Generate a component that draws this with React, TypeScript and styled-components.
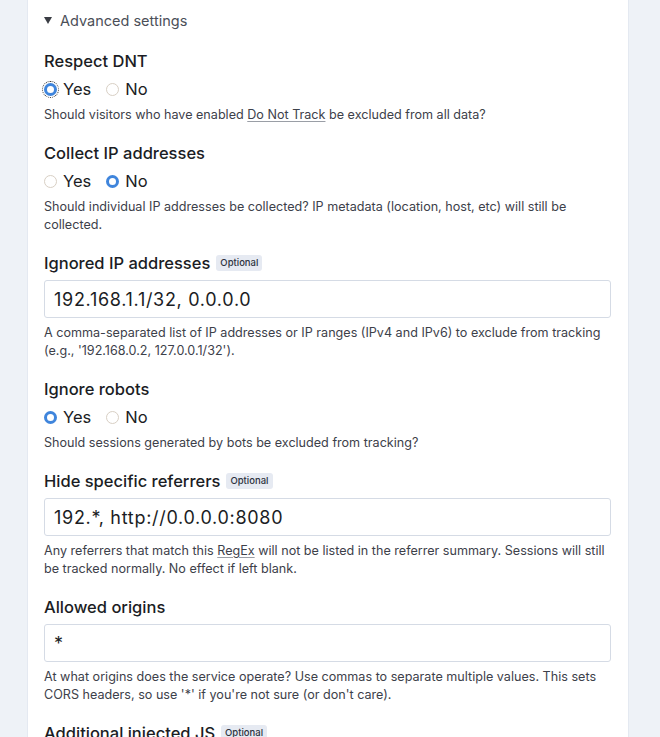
import React from "react";
import styled, { createGlobalStyle } from "styled-components";

const GlobalStyle = createGlobalStyle`
  html, body {
    margin: 0;
    padding: 0;
    background: #eef2f7;
    font-family: Inter, "Noto Sans", sans-serif;
    color: #1b1d24;
  }
`;

const Page = styled.div`
  height: 737px;
  overflow: hidden;
  padding: 0 32px 0 28px;
`;

const Card = styled.div`
  width: 600px;
  min-height: 900px;
  background: #fff;
  box-shadow: 0 0 0 1px #e4e9f1;
  padding: 6px 17px 0 16px;
  box-sizing: border-box;
`;

const Details = styled.details`
  margin: 0;
`;

const Summary = styled.summary`
  list-style: none;
  display: flex;
  align-items: center;
  gap: 8px;
  font-size: 14.5px;
  color: #4b4f58;
  padding: 6px 0 12px;
  cursor: pointer;

  &::-webkit-details-marker {
    display: none;
  }
`;

const Triangle = styled.span`
  width: 0;
  height: 0;
  border-left: 4.5px solid transparent;
  border-right: 4.5px solid transparent;
  border-top: 7px solid #3a3d44;
`;

const Field = styled.div`
  padding-top: 8px;
  padding-bottom: 9px;
`;

const Label = styled.div`
  display: flex;
  align-items: center;
  gap: 6px;
  font-size: 16.5px;
  font-weight: 500;
  line-height: 24px;
  color: #1b1d24;
`;

const Badge = styled.span`
  font-size: 9.5px;
  font-weight: 500;
  background: #e6eaf2;
  color: #2d3340;
  border-radius: 3px;
  padding: 2px 4px;
  line-height: 12px;
`;

const RadioRow = styled.div`
  display: flex;
  align-items: center;
  gap: 15px;
  margin-top: 4px;
  height: 24px;
`;

const RadioLabel = styled.label`
  display: flex;
  align-items: center;
  gap: 6px;
  font-size: 16.5px;
  color: #1b1d24;
`;

const Radio = styled.input.attrs({ type: "radio" })<{ $focus?: boolean }>`
  appearance: none;
  margin: 0;
  width: 13px;
  height: 13px;
  border-radius: 50%;
  border: 1px solid #d8cfc4;
  box-sizing: border-box;
  background: #fff;
  outline: ${(p) => (p.$focus ? "1px dotted #333" : "none")};
  outline-offset: 1px;

  &:checked {
    border: 3.5px solid #3f85dc;
  }
`;

const Help = styled.div<{ $afterInput?: boolean }>`
  font-size: 12.6px;
  line-height: 18px;
  color: #3d414a;
  margin-top: ${(p) => (p.$afterInput ? "6px" : "5px")};
`;

const HelpLink = styled.a`
  color: #3d414a;
  text-decoration: underline;
  text-decoration-color: #9a9ea6;
  text-underline-offset: 2px;
`;

const Input = styled.input`
  display: block;
  width: 100%;
  box-sizing: border-box;
  height: 38px;
  margin-top: 5px;
  border: 1px solid #d5dbe5;
  border-radius: 3px;
  padding: 0 9px;
  font-family: Inter, "Noto Sans", sans-serif;
  font-size: 18px;
  letter-spacing: 0.7px;
  color: #1b1d24;
  background: #fff;
`;

interface YesNoProps {
  name: string;
  value: boolean;
  focus?: boolean;
}

const YesNo = ({ name, value, focus }: YesNoProps): JSX.Element => (
  <RadioRow>
    <RadioLabel>
      <Radio name={name} defaultChecked={value} $focus={focus} />
      Yes
    </RadioLabel>
    <RadioLabel>
      <Radio name={name} defaultChecked={!value} />
      No
    </RadioLabel>
  </RadioRow>
);

const App = (): JSX.Element => {
  return (
    <>
      <GlobalStyle />
      <Page>
        <Card>
          <Details open>
            <Summary>
              <Triangle />
              Advanced settings
            </Summary>

            <Field>
              <Label>Respect DNT</Label>
              <YesNo name="dnt" value={true} focus />
              <Help>
                Should visitors who have enabled <HelpLink>Do Not Track</HelpLink> be
                excluded from all data?
              </Help>
            </Field>

            <Field>
              <Label>Collect IP addresses</Label>
              <YesNo name="collect-ip" value={false} />
              <Help>
                Should individual IP addresses be collected? IP metadata (location, host,
                etc) will still be collected.
              </Help>
            </Field>

            <Field>
              <Label>
                Ignored IP addresses <Badge>Optional</Badge>
              </Label>
              <Input defaultValue="192.168.1.1/32, 0.0.0.0" />
              <Help $afterInput>
                A comma-separated list of IP addresses or IP ranges (IPv4 and IPv6) to
                exclude from tracking (e.g., '192.168.0.2, 127.0.0.1/32').
              </Help>
            </Field>

            <Field>
              <Label>Ignore robots</Label>
              <YesNo name="robots" value={true} />
              <Help>Should sessions generated by bots be excluded from tracking?</Help>
            </Field>

            <Field>
              <Label>
                Hide specific referrers <Badge>Optional</Badge>
              </Label>
              <Input defaultValue="192.*, http://0.0.0.0:8080" />
              <Help $afterInput>
                Any referrers that match this <HelpLink>RegEx</HelpLink> will not be listed
                in the referrer summary. Sessions will still be tracked normally. No
                effect if left blank.
              </Help>
            </Field>

            <Field>
              <Label>Allowed origins</Label>
              <Input defaultValue="*" />
              <Help $afterInput>
                At what origins does the service operate? Use commas to separate multiple
                values. This sets CORS headers, so use '*' if you're not sure (or don't
                care).
              </Help>
            </Field>

            <Field>
              <Label>
                Additional injected JS <Badge>Optional</Badge>
              </Label>
            </Field>
          </Details>
        </Card>
      </Page>
    </>
  );
};

export default App;
